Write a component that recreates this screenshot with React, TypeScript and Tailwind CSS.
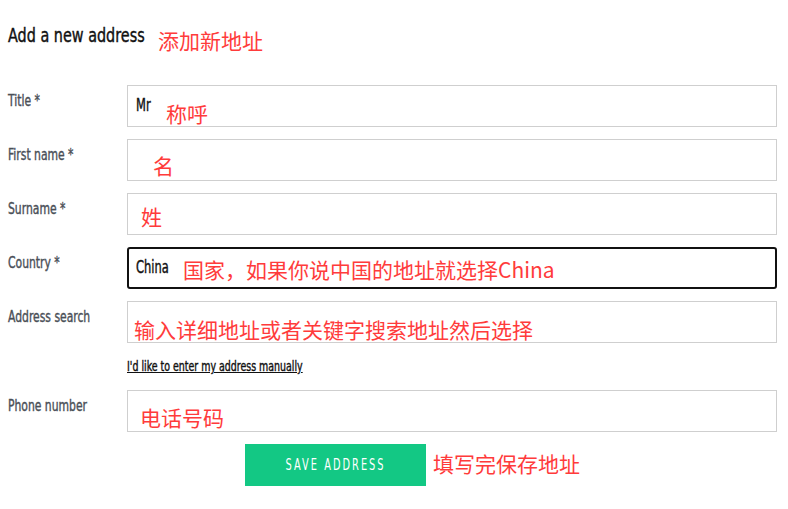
import React from "react";

const latin = "font-['DejaVu_Sans_Condensed','DejaVu_Sans',sans-serif]";
const cjk = "font-['Noto_Sans_CJK_SC',sans-serif]";
const stroke = "[-webkit-text-stroke:0.4px_currentColor]";

function Note({ children, className = "" }: { children: React.ReactNode; className?: string }) {
  return (
    <span className={`${cjk} text-[21px] leading-none text-[#ff3b3b] whitespace-nowrap ${className}`}>
      {children}
    </span>
  );
}

function Row({
  label,
  children,
  focused = false,
}: {
  label: string;
  children?: React.ReactNode;
  focused?: boolean;
}) {
  return (
    <div className="flex">
      <div className={`w-[119px] shrink-0 pt-[7px] text-[16px] leading-[17px] text-[#4a4f57] whitespace-nowrap ${latin}`}>
        <span className={`inline-block origin-left scale-x-[0.75] ${stroke}`}>{label}</span>
      </div>
      <div
        className={`w-[650px] h-[42px] flex items-center ${
          focused ? "border-2 border-[#111] rounded-[3px] pl-[7px]" : "border border-[#cfcfcf] pl-[8px]"
        }`}
      >
        {children}
      </div>
    </div>
  );
}

function Value({ text, width }: { text: string; width: string }) {
  return (
    <span className={`inline-block ${width} whitespace-nowrap text-[17px] text-[#111]`}>
      <span className={`inline-block origin-left scale-x-[0.75] ${stroke}`}>{text}</span>
    </span>
  );
}

export default function App() {
  return (
    <div className={`w-[788px] h-[509px] bg-white pl-[8px] pt-[25px] ${latin}`}>
      <div className="flex items-start">
        <span className="inline-block w-[137px] whitespace-nowrap text-[20px] leading-[20px] text-[#111]">
          <span className={`inline-block origin-left scale-x-[0.8] ${stroke}`}>Add a new address</span>
        </span>
        <Note className="ml-[13px] mt-[5px]">添加新地址</Note>
      </div>
      <div className="mt-[34px] flex flex-col gap-[12px]">
        <Row label="Title *">
          <Value text="Mr" width="w-[16px]" />
          <Note className="ml-[14px] translate-y-[7px]">称呼</Note>
        </Row>
        <Row label="First name *">
          <Note className="ml-[17px] translate-y-[5px]">名</Note>
        </Row>
        <Row label="Surname *">
          <Note className="ml-[5px] translate-y-[2px]">姓</Note>
        </Row>
        <Row label="Country *" focused>
          <Value text="China" width="w-[32px]" />
          <Note className="ml-[15px] translate-y-[1px]">国家，如果你说中国的地址就选择China</Note>
        </Row>
        <Row label="Address search">
          <Note className="ml-[-2px] translate-y-[7px]">输入详细地址或者关键字搜索地址然后选择</Note>
        </Row>
      </div>
      <div className="ml-[119px] mt-[15px] h-[17px] text-[14px] leading-[17px] text-[#111] whitespace-nowrap">
        <span className={`inline-block origin-left scale-x-[0.75] underline ${stroke}`}>I'd like to enter my address manually</span>
      </div>
      <div className="mt-[15px]">
        <Row label="Phone number">
          <Note className="ml-[4px] translate-y-[6px]">电话号码</Note>
        </Row>
      </div>
      <div className="mt-[12px] flex items-center">
        <button className="ml-[237px] w-[181px] h-[42px] bg-[#13c884] text-white text-[16px] tracking-[3px] whitespace-nowrap">
          <span className="inline-block scale-x-[0.68]">SAVE ADDRESS</span>
        </button>
        <Note className="ml-[7px] translate-y-[-2px]">填写完保存地址</Note>
      </div>
    </div>
  );
}
